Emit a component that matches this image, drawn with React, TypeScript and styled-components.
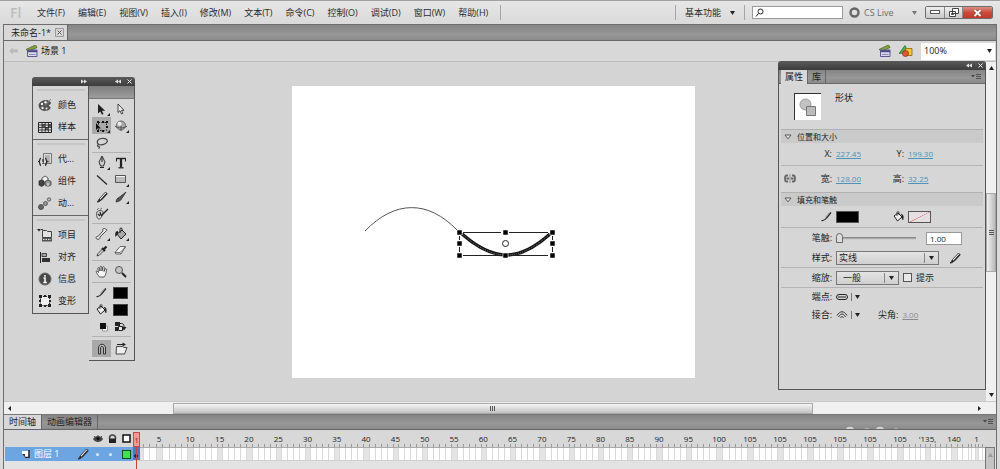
import React from 'react';
import styled, { createGlobalStyle } from 'styled-components';

const Global = createGlobalStyle`
  * { box-sizing: border-box; }
  body {
    margin: 0;
    background: #dadada;
    color: #222;
    font: 9px/12px "Open Sans", "Noto Sans CJK SC", sans-serif;
  }
  button, input, select {
    font: inherit;
    color: inherit;
    margin: 0;
    padding: 0;
    border: 0;
    border-radius: 0;
    background: none;
    appearance: none;
    outline: none;
  }
  button { white-space: nowrap; }
  svg { display: block; flex: none; }
  h2, p { margin: 0; font: inherit; }
`;

const bar = 'linear-gradient(#858585, #979797 60%, #8b8b8b)';
const dark = 'linear-gradient(#5a5a5a, #3c3c3c)';

const Page = styled.div`
  min-height: 100vh;
  display: flex;
  flex-direction: column;
  border-top: 1px solid #a29f9f;
`;

/* Menu bar */
const MenuBar = styled.header`
  display: flex;
  align-items: center;
  height: 23px;
  padding: 0 7px 0 10px;
  background: linear-gradient(#e6e6e6, #dadada);
`;
const Logo = styled.span`
  width: 27px;
  font: 600 14px/18px "Open Sans", sans-serif;
  color: #bdbdbd;
`;
const Menus = styled.nav`
  display: flex;
  gap: 13px;
  margin-right: 12px;
`;
const Divider = styled.span<{ $short?: boolean }>`
  width: 1px;
  height: ${(p) => (p.$short ? 8 : 15)}px;
  background: ${(p) => (p.$short ? '#777' : '#a5a5a5')};
`;
const Spacer = styled.span`
  flex: 1;
`;
const MenuButton = styled.button<{ $muted?: boolean }>`
  display: flex;
  align-items: center;
  gap: 9px;
  color: ${(p) => (p.$muted ? '#6c6c6c' : '#2a2a2a')};
`;
const Workspace = styled.div`
  display: flex;
  align-items: center;
  gap: 9px;
  margin-right: 7px;
`;
const SearchBox = styled.label`
  display: flex;
  align-items: center;
  width: 91px;
  height: 13px;
  margin-right: 6px;
  padding-left: 2px;
  background: #fff;
  border: 1px solid #9a9a9a;
  input { width: 70px; height: 10px; }
`;
const LiveButton = styled(MenuButton)`
  width: 68px;
  margin-right: 8px;
  gap: 4px;
  svg:last-child { margin-left: auto; }
`;
const WindowButtons = styled.div`
  display: flex;
  height: 13px;
  border: 1px solid #6d6d6d;
  border-radius: 2px;
  overflow: hidden;
`;
const WindowButton = styled.button<{ $close?: boolean }>`
  display: grid;
  place-items: center;
  width: ${(p) => (p.$close ? 30 : 18)}px;
  background: ${(p) => (p.$close ? 'linear-gradient(#dd8f84, #c94b3c 50%, #c2392a)' : 'linear-gradient(#eee, #c9c9c9)')};
  & + & { border-left: 1px solid #888; }
`;

/* Document window */
const DocWindow = styled.main`
  flex: 1;
  display: flex;
  flex-direction: column;
  margin: 0 3px;
  border: solid #6e6e6e;
  border-width: 1px 1px 0;
`;
const TabBar = styled.div`
  display: flex;
  height: 16px;
  background: ${bar};
  border-bottom: 1px solid #6a6a6a;
`;
const DocTab = styled.button`
  display: flex;
  align-items: center;
  gap: 4px;
  padding: 0 3px 0 7px;
  background: #d9d9d9;
  border-right: 1px solid #666;
`;
const SceneBar = styled.div`
  display: flex;
  align-items: center;
  height: 21px;
  padding: 0 1px 0 5px;
  gap: 8px;
  background: #d8d8d8;
  border-bottom: 1px solid #bdbdbd;
`;
const SceneName = styled.button`
  display: flex;
  align-items: center;
  gap: 3px;
  color: #111;
`;
const ZoomField = styled.label`
  display: flex;
  align-items: center;
  width: 74px;
  height: 17px;
  padding: 0 3px;
  background: #fff;
  select { flex: 1; height: 15px; }
`;
const StageRow = styled.div`
  position: relative;
  flex: 1;
  display: flex;
  min-height: 338px;
`;
const Stage = styled.section`
  flex: 1;
  display: flex;
  justify-content: center;
  align-items: flex-start;
  padding: 24px 4px 20px 0;
  background: #d4d4d4;
`;
const VScroll = styled.div`
  width: 10px;
  display: flex;
  flex-direction: column;
  align-items: center;
  padding: 4px 0;
  background: #f0f0f0;
`;
const VThumb = styled.span`
  width: 10px;
  height: 79px;
  margin: 123px 0 auto;
  display: grid;
  place-items: center;
  border: 1px solid #a9a9a9;
  background: linear-gradient(90deg, #eee, #bbb);
`;
const HScroll = styled.div`
  display: flex;
  align-items: center;
  height: 13px;
  padding: 0 15px 0 4px;
  background: #f0f0f0;
  border-top: 1px solid #c9c9c9;
`;
const HTrack = styled.div`
  flex: 1;
  display: grid;
  grid-template-columns: 161fr 642fr 164fr;
  height: 11px;
`;
const HThumb = styled.span`
  grid-column: 2;
  display: grid;
  place-items: center;
  border: 1px solid #a9a9a9;
  background: linear-gradient(#f6f6f6, #c2c2c2);
`;

/* Floating panels */
const Floating = styled.div<{ $left?: number; $right?: number }>`
  position: absolute;
  top: ${(p) => (p.$left === undefined ? -1 : 15)}px;
  ${(p) => (p.$left === undefined ? `right: ${p.$right}px;` : `left: ${p.$left}px;`)}
`;
const PanelHead = styled.div`
  display: flex;
  align-items: center;
  justify-content: flex-end;
  gap: 6px;
  height: 9px;
  padding-right: 3px;
  background: ${dark};
  border-radius: 3px 3px 0 0;
`;
const DockHead = styled(PanelHead)`
  justify-content: space-between;
  padding-left: 49px;
`;
const HeadButtons = styled.span`
  display: flex;
  gap: 6px;
`;
const Docks = styled.div`
  display: flex;
  align-items: flex-start;
`;
const Dock = styled.div`
  width: 57px;
  background: #d6d6d6;
  border: 1px solid #555;
  border-top: 0;
`;
const DockGroup = styled.div`
  padding: 8px 3px 1px;
  background: linear-gradient(#c6c6c6, #c6c6c6) 4px 3px / 48px 2px no-repeat;
  & + & { border-top: 1px solid #666; }
`;
const DockItem = styled.button`
  display: grid;
  grid-template-columns: 18px 1fr;
  gap: 4px;
  align-items: center;
  justify-items: center;
  height: 22px;
  span { justify-self: start; }
`;
const ToolPanel = styled.div`
  width: 46px;
  background: #d6d6d6;
  border: 1px solid #555;
  border-width: 0 1px 1px 0;
`;
const ToolBand = styled.div`
  height: 13px;
  background: linear-gradient(#7e7e7e, #9c9c9c);
  border-bottom: 1px solid #777;
`;
const ToolGroup = styled.div<{ $pad: number }>`
  display: grid;
  grid-template-columns: 19px 19px;
  grid-auto-rows: 17px;
  margin: 0 3px;
  padding: ${(p) => p.$pad}px 0;
  & + & { border-top: 1px solid #b2b2b2; }
`;
const Tool = styled.button<{ $on?: boolean }>`
  position: relative;
  display: grid;
  place-items: center;
  background: ${(p) => (p.$on ? '#a9a9a9' : 'none')};
`;
const Corner = styled.i`
  position: absolute;
  right: 1px;
  bottom: 1px;
  border: solid transparent;
  border-width: 3px 0 0 3px;
  border-bottom: 3px solid #222;
  height: 0;
`;
const Swatch = styled.span`
  width: 15px;
  height: 12px;
  background: #000;
  border: 1px solid #444;
`;

/* Properties panel */
const Props = styled.section`
  width: 208px;
  height: 320px;
  background: #d6d6d6;
  border: 1px solid #555;
  border-top: 0;
`;
const PropTabs = styled.div`
  display: flex;
  align-items: center;
  height: 14px;
  padding: 0 3px 0 2px;
  background: ${bar};
  border-bottom: 1px solid #6a6a6a;
`;
const PropTab = styled.button<{ $on?: boolean }>`
  height: 14px;
  padding: 0 4px;
  background: ${(p) => (p.$on ? '#d8d8d8' : 'none')};
  border-right: 1px solid #666;
`;
const Identity = styled.div`
  display: flex;
  gap: 14px;
  height: 45px;
  padding: 9px 15px;
  p { margin-top: -1px; }
`;
const Thumb = styled.div`
  display: grid;
  place-items: center;
  width: 27px;
  height: 27px;
  background: #fff;
  border: solid #333;
  border-width: 1px 0 0 1px;
`;
const SectionHead = styled.button`
  display: flex;
  align-items: center;
  gap: 5px;
  width: calc(100% - 4px);
  height: 14px;
  margin-left: 2px;
  padding-left: 3px;
  font-size: 8px;
  background: #cacaca;
  border-top: 1px solid #b2b2b2;
`;
const Row = styled.div<{ $h: number; $line?: boolean }>`
  display: flex;
  align-items: center;
  gap: 4px;
  height: ${(p) => p.$h}px;
  margin: 0 2px;
  border-bottom: 1px solid ${(p) => (p.$line ? '#b4b4b4' : 'transparent')};
`;
const PairRow = styled(Row)`
  display: grid;
  grid-template-columns: 51px 42px 22px 1fr;
`;
const Label = styled.label`
  display: flex;
  align-items: center;
  justify-content: flex-end;
  min-width: 51px;
`;
const SideLabel = styled(Label)`
  min-width: 0;
`;
const LinkIcon = styled.span`
  margin-right: auto;
  padding-left: 3px;
`;
const HotText = styled.input<{ $muted?: boolean }>`
  width: ${(p) => (p.$muted ? 18 : 26)}px;
  height: 12px;
  font-size: 8px;
  color: ${(p) => (p.$muted ? '#8a8a8a' : '#4a93bd')};
  text-decoration: underline;
`;
const ColorWell = styled.button<{ $none?: boolean }>`
  width: 23px;
  height: 12px;
  border: 1px solid #555;
  background: ${(p) =>
    p.$none ? 'linear-gradient(153deg, #e6dfe1 48%, #dd8c92 49%, #dd8c92 52%, #e6dfe1 53%)' : '#000'};
`;
const Slider = styled.input`
  width: 80px;
  height: 12px;
  margin-right: 6px;
  background: linear-gradient(#777, #ddd) 0 5px / 100% 3px no-repeat;
  &::-webkit-slider-thumb {
    appearance: none;
    width: 7px;
    height: 10px;
    background: #ddd;
    border: 1px solid #666;
    border-radius: 4px 4px 0 0;
  }
`;
const NumberBox = styled.input`
  width: 36px;
  height: 13px;
  padding-left: 3px;
  font-size: 8px;
  background: #fff;
  border: 1px solid #999;
`;
const SelectBox = styled.span<{ $w: number; $indent?: boolean }>`
  display: flex;
  align-items: center;
  gap: 4px;
  width: ${(p) => p.$w}px;
  height: 14px;
  padding: 0 4px 0 ${(p) => (p.$indent ? 6 : 2)}px;
  border: 1px solid #777;
  background: linear-gradient(#e4e4e4, #cfcfcf);
  select { flex: 1; height: 10px; line-height: 10px; min-width: 0; border-right: 1px solid #888; }
`;
const EditButton = styled.button`
  margin-left: 6px;
`;
const Check = styled.input`
  width: 9px;
  height: 9px;
  background: #e8e8e8;
  border: 1px solid #555;
`;
const DropButton = styled.button`
  display: flex;
  align-items: center;
  gap: 3px;
  width: 38px;
  height: 12px;
`;

/* Timeline */
const TimeTabs = styled.div`
  display: flex;
  align-items: center;
  height: 16px;
  padding-right: 2px;
  background: ${bar};
  border-top: 1px solid #777;
  border-bottom: 1px solid #666;
`;
const TimeTab = styled(PropTab)`
  padding: 0 5px;
`;
const Glints = styled.span`
  align-self: flex-end;
  margin-right: 84px;
`;
const Timeline = styled.section`
  display: grid;
  grid-template-columns: 129px 1fr 11px;
  min-height: 39px;
  background: #e3e3e3;
`;
const LayerHead = styled.div`
  display: flex;
  align-items: center;
  justify-content: flex-end;
  gap: 5px;
  height: 17px;
  padding-right: 2px;
  background: #d8d8d8;
`;
const Layer = styled.div`
  display: flex;
  align-items: center;
  height: 14px;
  margin-left: 1px;
  padding: 0 2px 0 16px;
  gap: 4px;
  color: #fff;
  background: #6ca5e2;
`;
const Marks = styled.span`
  display: flex;
  align-items: center;
  gap: 10px;
  margin-left: 3px;
`;
const Dot = styled.i`
  width: 3px;
  height: 3px;
  border-radius: 2px;
  background: #d8ecff;
`;
const LayerColor = styled.button`
  width: 9px;
  height: 9px;
  background: #3fe34f;
  border: 1px solid #134d1a;
`;
const FrameArea = styled.div`
  position: relative;
  display: flex;
  flex-direction: column;
  min-width: 0;
`;
const Ruler = styled.div`
  display: flex;
  height: 17px;
  padding-left: 10px;
  font-size: 8px;
  background: #d8d8d8;
  overflow: hidden;
`;
const RulerMark = styled.span<{ $w: number }>`
  flex: ${(p) => p.$w} 1 0;
  min-width: 0;
  display: flex;
  justify-content: center;
  padding-top: 3px;
  background: repeating-linear-gradient(90deg, #999 0 1px, transparent 1px 20%) 0 100% / 100% 3px no-repeat;
`;
const Frames = styled.div`
  display: flex;
  height: 14px;
  padding-left: 10px;
  border-top: 1px solid #aaa;
  border-bottom: 1px solid #cfcfcf;
`;
const FrameBlock = styled.span<{ $w: number }>`
  flex: ${(p) => p.$w} 1 0;
  min-width: 0;
  background:
    repeating-linear-gradient(90deg, #d9d9d9 0 1px, transparent 1px 20%),
    linear-gradient(90deg, #fff 40%, #e4e4e4 40%, #e4e4e4 60%, #fff 60%);
`;
const FrameScroll = styled.div`
  padding-top: 17px;
  background: linear-gradient(#d8d8d8, #d8d8d8) 0 0 / 100% 17px no-repeat;
  button {
    display: flex;
    justify-content: center;
    width: 10px;
    height: 100%;
    padding-top: 5px;
    background: #c4c4c4;
    border: 1px solid #777;
    border-bottom: 0;
  }
`;
const Playhead = styled.span`
  position: absolute;
  top: 2px;
  bottom: 0;
  left: 0;
  width: 7px;
  text-align: center;
  background: linear-gradient(#c8403c, #c8403c) 3px 0 / 1px 100% no-repeat;
  b {
    display: block;
    height: 15px;
    font: 8px/13px "Open Sans", sans-serif;
    color: #8d1f1f;
    background: #f09a9a;
    border: 1px solid #c84a48;
  }
`;
const KeyFrame = styled.span`
  position: absolute;
  top: 17px;
  left: 0;
  width: 7px;
  height: 13px;
  background: radial-gradient(circle at 3px 9px, #1c2c66 2px, #4f78c0 2px);
`;

type P = { children: React.ReactNode; w?: number; h?: number };
const Ico = ({ children, w = 16, h = 16 }: P) => (
  <svg width={w} height={h} viewBox={`0 0 ${w} ${h}`} fill="none" stroke="#222" strokeWidth="1" aria-hidden="true">
    {children}
  </svg>
);
const Down = ({ c = '#222' }: { c?: string }) => (
  <Ico w={5} h={4}><path d="M0 0h5L2.500 4z" fill={c} stroke="none" /></Ico>
);
const Tri = () => (
  <Ico w={8} h={6}><path d="M1 1h6L4 4.800z" stroke="#555" fill="#eee" /></Ico>
);
const MenuGlyph = () => (
  <Ico w={11} h={8}><path d="M0 2h4L2 4.500z" fill="#444" stroke="none" /><path d="M5 1.500h5M5 3.500h5M5 5.500h5" stroke="#505050" /></Ico>
);
const Collapse = ({ flip }: { flip?: boolean }) => (
  <Ico w={6} h={5}>
    <path d={flip ? 'M0 .5l3 2-3 2zM3 .5l3 2-3 2z' : 'M3 .5l-3 2 3 2zM6 .5l-3 2 3 2z'} fill="#e4e4e4" stroke="none" />
  </Ico>
);
const Cross = () => <Ico w={5} h={5}><path d="M.5.5l4 4M4.500.5l-4 4" stroke="#eee" /></Ico>;
const Clapper = () => (
  <Ico w={12} h={12}>
    <path d="M0 4.500L9.500 0l1.500 2.500L3 6z" fill="#86a83a" stroke="#41551f" strokeWidth=".7" />
    <path d="M1.500 5h9.500v6.500H1.500z" fill="#d9d8ee" stroke="#5b5793" />
    <path d="M2 6.200h9" stroke="#4b4682" strokeWidth="2" /><path d="M3 9.500h6.500" stroke="#8f8bbd" />
  </Ico>
);
const ShapesIcon = () => (
  <Ico w={14} h={12}>
    <path d="M0 8.500l6-8 3.500 7z" fill="#46b04a" stroke="#28662a" strokeWidth=".7" />
    <path d="M6.500 3.500h6.500v7H6.500z" fill="#f2c730" stroke="#8a6a10" strokeWidth=".8" />
    <circle cx="6.500" cy="8.500" r="3" fill="#e2583a" stroke="#8b2513" strokeWidth=".7" />
  </Ico>
);
const Pencil = () => (
  <Ico w={12} h={12}>
    <path d="M1 11c2 0 3-.5 4-2l6-6.500L9.500 1 3.500 7.500C3 9 2 10 1 11z" fill="#eee" strokeWidth=".8" />
    <path d="M11 2.500L5 9" strokeWidth="1.400" />
    <path d="M1 11c1.500 0 3-.5 4-2L3.500 7.500C3 9 2 10 1 11z" fill="#222" stroke="none" />
  </Ico>
);
const Stroke = () => (
  <Ico w={11} h={11}>
    <path d="M.5 9.500c2.500.3 4-1 5-2.500L10 1.500" strokeWidth="1.200" />
    <path d="M4.500 6.500L8.500 1.500" stroke="#888" strokeWidth=".8" />
  </Ico>
);
const Bucket = () => (
  <Ico w={11} h={11}>
    <path d="M1 5l4-3 4 4-4.500 4z" fill="#eee" />
    <path d="M4 5V1.500C4 .3 6 .3 6 1.500V4" strokeWidth=".8" />
    <path d="M8 3c2.500.5 2.800 3 2 6-.8-1-1.500-2.500-1-4z" fill="#222" strokeWidth=".4" />
  </Ico>
);

const dockIcons: Record<string, React.ReactNode> = {
  颜色: (
    <Ico w={14} h={14}>
      <path d="M1 7.500c0-3 3-4.500 6-5 3-.5 6 1 5.500 3-.4 1.200-2 .8-2 2s2 1 1.700 2.500c-.4 1.700-3 2.500-5.500 2.500-3.200 0-5.700-2-5.700-5z" fill="#555" stroke="#333" strokeWidth=".6" />
      <g fill="#eee" stroke="none"><circle cx="4" cy="6" r="1.200" /><circle cx="7.500" cy="4.300" r="1.200" /><circle cx="4.500" cy="10" r="1.200" /><circle cx="8.500" cy="10.500" r="1" /></g>
      <path d="M7 7.500L13 1" stroke="#888" />
    </Ico>
  ),
  样本: (
    <Ico w={14} h={11}>
      <path d="M.5.5h13v10H.5z" fill="#ddd" /><path d="M4 2h3v3H4zM7 5h3v3H7zM10 2h3v3h-3z" fill="#666" stroke="none" />
      <path d="M4 .5v10M7.200.5v10M10.400.5v10M.5 3h13M.5 5.500h13M.5 8h13" stroke="#222" strokeWidth=".8" />
    </Ico>
  ),
  '代...': (
    <Ico w={15} h={13}>
      <path d="M5.500.5h8v10h-8z" fill="#ddd" stroke="#777" /><path d="M7 3h5M7 5h5M8 7h4M9 9h3" stroke="#888" />
      <path d="M3 5C1 5.500 2.500 8 .8 8.500 2.500 9 1 12 3 12.500M7 5c2 .5.500 3 2.200 3.500C7.500 9 9 12 7 12.500M5 6v3M5 10v1" strokeWidth="1.200" />
    </Ico>
  ),
  组件: (
    <Ico w={14} h={12}>
      <path d="M4 3l3-2 3 2v4L7 8 4 7z" fill="#eee" strokeWidth=".7" />
      <path d="M1 6l2.500-1L6 6v4l-2.500 1.500L1 10z" fill="#444" strokeWidth=".7" />
      <path d="M7 6.500L10 5l3 1.500V10l-3 1.500L7 10z" fill="#999" strokeWidth=".7" /><path d="M10 8v3.500" stroke="#eee" />
    </Ico>
  ),
  '动...': (
    <Ico w={14} h={13}>
      <g stroke="#333" strokeWidth=".7"><circle cx="3" cy="10" r="2.500" fill="#666" /><circle cx="7.500" cy="6.500" r="2" fill="#999" /><circle cx="11" cy="2.500" r="1.700" fill="#bbb" /></g>
    </Ico>
  ),
  项目: (
    <Ico w={16} h={14}>
      <path d="M0 1h4L2 3.500z" fill="#222" stroke="none" /><path d="M4 1.500h2M5.500 2.500h4l1 1h4v6h-9z" fill="#e2e2e2" stroke="#444" />
      <path d="M5 10h10v3.500H5z" fill="#555" stroke="none" /><path d="M6 11.500h8" stroke="#ddd" strokeDasharray="1.500 1" />
    </Ico>
  ),
  对齐: (
    <Ico w={12} h={11}><path d="M1.500 0v11" /><path d="M3 1.500h4.500v3H3z" fill="#aaa" strokeWidth=".8" /><path d="M3 6h8v4H3z" fill="#333" stroke="none" /></Ico>
  ),
  信息: (
    <Ico w={14} h={14}><circle cx="7" cy="7" r="6" fill="#484848" stroke="#666" /><path d="M7 3v1.800M5.500 6H7v4.500M5.300 10.500h3.500" stroke="#fff" strokeWidth="1.500" /></Ico>
  ),
  变形: (
    <Ico w={12} h={12}>
      <path d="M1.500 1.500h9v9h-9z" fill="#eee" strokeDasharray="1.500 1" />
      <path d="M0 0h3v3H0zM9 0h3v3H9zM0 9h3v3H0zM9 9h3v3H9zM5 0h2v2H5zM5 10h2v2H5zM0 5h2v2H0zM10 5h2v2h-2z" fill="#222" stroke="none" />
    </Ico>
  ),
};
const docks = [['颜色', '样本'], ['代...', '组件', '动...'], ['项目', '对齐', '信息', '变形']];

type ToolDef = { name: string; icon: React.ReactNode; on?: boolean; more?: boolean } | null;
const toolGroups: { pad: number; tools: ToolDef[] }[] = [
  { pad: 1, tools: [
    { name: '选择', more: true, icon: <Ico w={12} h={12}><path d="M2 1v9.500l2.300-2 1.700 3.200 1.500-.8L6 7.700h3.200z" fill="#222" stroke="none" /></Ico> },
    { name: '部分选取', icon: <Ico w={12} h={12}><path d="M3 1v8.500l2-1.800L6.500 11l1.300-.6L6.500 7.300H9z" fill="#eee" strokeWidth=".8" /></Ico> },
    { name: '任意变形', on: true, more: true, icon: <Ico w={13} h={12}><path d="M3.500 2.500h8v8h-8z" strokeDasharray="1.500 1.500" /><path d="M2 1h2v2H2zM7 1h2v2H7zM11 1h2v2h-2zM11 6h2v2h-2zM2 10h2v2H2zM7 10h2v2H7z" fill="#111" stroke="none" /><path d="M1 3v7l1.700-1.500H6z" fill="#111" stroke="none" /></Ico> },
    { name: '3D 旋转', more: true, icon: <Ico w={14} h={14}><circle cx="7" cy="6.500" r="4.500" fill="#aaa" stroke="#666" /><circle cx="5.500" cy="4.800" r="2" fill="#eee" stroke="none" /><path d="M1 7c2 2.500 10 2.500 12 0M7 7v5" stroke="#555" /></Ico> },
    { name: '套索', icon: <Ico w={14} h={12}><path d="M4 7.500C1 6 2 2 6.500 1.500S13 3 12 5 7 8.500 4 7.500zM4 7.500c-2 0-2 2-.5 2s1 1.500 0 2" stroke="#444" strokeWidth="1.200" /></Ico> },
    null,
  ] },
  { pad: 1, tools: [
    { name: '钢笔', more: true, icon: <Ico w={12} h={13}><path d="M6 0L3 6l1.500 4h3L9 6z" fill="#ccc" strokeWidth=".9" /><path d="M6 1v5M4 11.500h4" /></Ico> },
    { name: '文本', icon: <Ico w={12} h={12}><path d="M1.500 4.500V1.500h9v3" strokeWidth="1" /><path d="M1 1.500h10" strokeWidth="1.400" /><path d="M6 1.500v9" strokeWidth="2.200" /><path d="M3.500 10.800h5" strokeWidth="1.200" /></Ico> },
    { name: '线条', icon: <Ico w={12} h={12}><path d="M1 1.500l10 9" strokeWidth="1.200" /></Ico> },
    { name: '矩形', more: true, icon: <Ico w={13} h={11}><path d="M1.500 1.500h10v7h-10z" fill="#bbb" stroke="#555" /><path d="M2 2.500h9" stroke="#f4f4f4" /></Ico> },
    { name: '铅笔', icon: <Pencil /> },
    { name: '刷子', more: true, icon: <Ico w={12} h={12}><path d="M1 11c.5-3 1.500-4 3-4.500L11 1 6.500 8C5.500 10 3.500 10.500 1 11z" fill="#555" strokeWidth=".7" /></Ico> },
    { name: 'Deco', icon: <Ico w={14} h={13}><path d="M2 5c1-2 7-2 6 1s-2 6-4 6-3-4-2-7z" fill="#ddd" strokeWidth=".8" /><path d="M3 7l2 2M5 5l1 3M6 9l7-7" strokeWidth="1.300" /><path d="M2 3l2-2M5 2.500L7 1" stroke="#777" /></Ico> },
    null,
  ] },
  { pad: 1, tools: [
    { name: '骨骼', more: true, icon: <Ico w={13} h={13}><path d="M2 12c-2-1-.5-3 1-2.500L8 4c-1-2 1-3.500 2-2 2-.5 2.500 2 .5 2.500L5 10c.5 2-2 3-3 2z" fill="#eee" strokeWidth=".8" /></Ico> },
    { name: '颜料桶', more: true, icon: <Ico w={13} h={13}><path d="M3 7l5-4 4 4-5 5z" fill="#aaa" /><path d="M6 6V2c0-1.500 2-1.500 2 0v2" /><path d="M4 4C1 4 1 7 1.500 10 3 9 3 7 4 6z" fill="#222" stroke="none" /></Ico> },
    { name: '滴管', icon: <Ico w={12} h={12}><path d="M1 11l1-2.500 5-5L8.500 5l-5 5z" fill="#ddd" strokeWidth=".8" /><path d="M6 3l3 3M7.500 4.500l3-3" strokeWidth="2.200" /></Ico> },
    { name: '橡皮擦', icon: <Ico w={13} h={11}><path d="M1 7.500L6 1.500h5.500L7 9H2z" fill="#f2f2f2" stroke="#444" strokeWidth=".8" /><path d="M1 7.500h5L11.500 2M6 7.500L7 9" stroke="#555" strokeWidth=".8" /></Ico> },
  ] },
  { pad: 2, tools: [
    { name: '手形', icon: <Ico w={13} h={13}><path d="M4.500 12C3 10 1.500 8 1 6.500c.8-.8 1.800 0 2.500 1L2.800 3c.8-.8 1.600-.2 1.800.6L5 6V1.800c.6-1 1.700-.6 1.700.3L7 6l.8-4c.8-.8 1.600 0 1.500.8L9 6.500l1.200-2.700c1-.4 1.500.3 1.300 1C11 8 11 10 9 12z" fill="#f5f5f5" strokeWidth=".7" /></Ico> },
    { name: '缩放', icon: <Ico w={13} h={13}><circle cx="5" cy="5" r="3.500" fill="#c4c4c4" stroke="#555" /><path d="M8 8l4 4" strokeWidth="2" /></Ico> },
  ] },
  { pad: 1, tools: [
    { name: '笔触颜色', icon: <Stroke /> },
    { name: '笔触色板', icon: <Swatch /> },
    { name: '填充颜色', icon: <Bucket /> },
    { name: '填充色板', icon: <Swatch /> },
    { name: '黑白', icon: <Ico w={13} h={10}><path d="M7.500 4v5h5V4z" fill="#fff" stroke="#999" /><path d="M5 1h6v6H5z" fill="#111" stroke="none" /></Ico> },
    { name: '交换颜色', icon: <Ico w={14} h={11}><path d="M1 1h5v4H1zM1 6h3v4H1z" fill="#222" stroke="none" /><path d="M4.500 5.500h4v4h-4z" fill="#eee" /><path d="M6 2.500h1.500c2 0 2.500 1 2.500 4" /><path d="M7.500 6h5L10 9.500z" fill="#222" stroke="none" /></Ico> },
  ] },
  { pad: 3, tools: [
    { name: '贴紧至对象', on: true, icon: <Ico w={12} h={12}><path d="M2.500 11V5c0-5 7-5 7 0v6h-2V5c0-2-3-2-3 0v6z" fill="#bbb" stroke="#333" /></Ico> },
    { name: '选项', icon: <Ico w={14} h={13}><path d="M2.500 4.500h6l1.500 1h3l-2.500 6.500H2z" fill="#eee" stroke="#444" /><path d="M3 2.500h7" /><path d="M8.500.5l3.500 2-3.500 2z" fill="#222" stroke="none" /></Ico> },
  ] },
];

const menus = ['文件(F)', '编辑(E)', '视图(V)', '插入(I)', '修改(M)', '文本(T)', '命令(C)', '控制(O)', '调试(D)', '窗口(W)', '帮助(H)'];

/* Ruler label and relative width of each five-frame block */
const blocks: [string, number][] = [
  ['5', 320], ['10', 300],
  ...Array.from({ length: 17 }, (_, i): [string, number] => [String(15 + i * 5), 293]),
  ['100', 320],
  ...Array.from({ length: 6 }, (): [string, number] => ['105', 300]),
  ["'135,", 250], ['140', 280], ['1', 170],
];

const Artwork = () => {
  const xs = [167, 213, 260];
  const ys = [146, 157, 169];
  return (
    <svg width="403" height="292" viewBox="0 0 403 292" role="img" aria-label="舞台">
      <rect width="403" height="292" fill="#fff" />
      <path d="M73 145C103 114 136 114 165 144" fill="none" stroke="#555" />
      <path d="M170 148C202 176 227 176 258 148" fill="none" stroke="#111" strokeWidth="3.400" />
      <path d="M170 148C202 176 227 176 258 148" fill="none" stroke="#777" strokeWidth="1" strokeDasharray="1 1" />
      <path d="M171 146.500h38M217 146.500h39M171 169.500h38M217 169.500h39M167.500 150v4M167.500 161v5M260.500 150v4M260.500 161v5" stroke="#222" />
      {xs.map((x) => ys.map((y) => (x === 213 && y === 157 ? null : (
        <rect key={`${x}-${y}`} x={x - 2} y={y - 2} width="5" height="5" fill="#000" stroke="#fff" strokeWidth=".5" />
      ))))}
      <circle cx="213.500" cy="157.500" r="3" fill="#fff" stroke="#222" />
    </svg>
  );
};

function Tools() {
  return (
    <Floating $left={28}>
      <DockHead>
        <Collapse flip />
        <HeadButtons><Collapse /><Cross /></HeadButtons>
      </DockHead>
      <Docks>
        <Dock>
          {docks.map((g) => (
            <DockGroup key={g[0]}>
              {g.map((n) => <DockItem key={n}>{dockIcons[n]}<span>{n}</span></DockItem>)}
            </DockGroup>
          ))}
        </Dock>
        <ToolPanel>
          <ToolBand />
          {toolGroups.map((g, i) => (
            <ToolGroup key={i} $pad={g.pad}>
              {g.tools.map((t, j) => t ? (
                <Tool key={t.name} $on={t.on} aria-label={t.name}>{t.icon}{t.more && <Corner />}</Tool>
              ) : <span key={j} />)}
            </ToolGroup>
          ))}
        </ToolPanel>
      </Docks>
    </Floating>
  );
}

function Properties() {
  return (
    <Floating $right={10}>
      <PanelHead><Collapse /><Cross /></PanelHead>
      <Props>
        <PropTabs>
          <PropTab $on>属性</PropTab>
          <PropTab>库</PropTab>
          <Spacer />
          <MenuGlyph />
        </PropTabs>
        <Identity>
          <Thumb>
            <Ico w={18} h={19}>
              <circle cx="6.500" cy="6.500" r="5.500" fill="#c2c2c2" stroke="#999" />
              <path d="M7.500 8.500h9v9h-9z" fill="#bbb" stroke="#777" />
            </Ico>
          </Thumb>
          <p>形状</p>
        </Identity>
        <SectionHead><Tri />位置和大小</SectionHead>
        <PairRow $h={23} $line>
          <Label htmlFor="x">X:</Label><HotText id="x" defaultValue="227.45" />
          <SideLabel htmlFor="y">Y:</SideLabel><HotText id="y" defaultValue="199.30" />
        </PairRow>
        <PairRow $h={26}>
          <Label htmlFor="w">
            <LinkIcon>
              <Ico w={12} h={9}><path d="M4 1.500H2.500c-2 0-2 6 0 6H4M8 1.500h1.500c2 0 2 6 0 6H8M2.500 4.500H5M7 4.500h2.500" stroke="#666" strokeWidth="1.800" /><path d="M6 0v9" stroke="#888" /></Ico>
            </LinkIcon>
            宽:
          </Label>
          <HotText id="w" defaultValue="128.00" />
          <SideLabel htmlFor="h">高:</SideLabel><HotText id="h" defaultValue="32.25" />
        </PairRow>
        <SectionHead><Tri />填充和笔触</SectionHead>
        <PairRow $h={22} $line>
          <Label as="span"><Stroke /></Label><ColorWell aria-label="笔触颜色" />
          <SideLabel as="span"><Bucket /></SideLabel><ColorWell $none aria-label="填充颜色" />
        </PairRow>
        <Row $h={21}>
          <Label htmlFor="size">笔触:</Label>
          <Slider id="size" type="range" min="0" max="200" defaultValue="1" />
          <NumberBox aria-label="笔触大小" defaultValue="1.00" />
        </Row>
        <Row $h={19} $line>
          <Label htmlFor="style">样式:</Label>
          <SelectBox $w={103}><select id="style"><option>实线</option></select><Down /></SelectBox>
          <EditButton aria-label="编辑笔触样式"><Pencil /></EditButton>
        </Row>
        <Row $h={20} $line>
          <Label htmlFor="scale">缩放:</Label>
          <SelectBox $w={63} $indent><select id="scale"><option>一般</option></select><Down /></SelectBox>
          <Check type="checkbox" id="hint" />
          <SideLabel htmlFor="hint">提示</SideLabel>
        </Row>
        <Row $h={18}>
          <Label htmlFor="cap">端点:</Label>
          <DropButton id="cap">
            <Ico w={12} h={6}><rect x=".5" y=".5" width="11" height="5" rx="2.500" /><path d="M2 3h8" /></Ico>
            <Divider $short /><Down />
          </DropButton>
        </Row>
        <Row $h={18}>
          <Label htmlFor="join">接合:</Label>
          <DropButton id="join">
            <Ico w={12} h={9}><path d="M1 5.500c3-5 7-5 10 0M2.500 7c2.500-4 4.500-4 7 0M4.500 8c1-2 2-2 3 0" stroke="#333" /></Ico>
            <Divider $short /><Down />
          </DropButton>
          <SideLabel htmlFor="miter">尖角:</SideLabel>
          <HotText id="miter" $muted defaultValue="3.00" />
        </Row>
      </Props>
    </Floating>
  );
}

export default function App() {
  return (
    <Page>
      <Global />
      <MenuBar>
        <Logo>Fl</Logo>
        <Menus>{menus.map((m) => <MenuButton key={m}>{m}</MenuButton>)}</Menus>
        <Divider />
        <Spacer />
        <Workspace>
          <Divider />
          <MenuButton>基本功能<Down /></MenuButton>
          <Divider />
        </Workspace>
        <SearchBox>
          <Ico w={9} h={9}><circle cx="5.500" cy="3.500" r="2.500" /><path d="M3.500 5.500L1 8.500" /></Ico>
          <input type="search" aria-label="搜索" />
        </SearchBox>
        <LiveButton $muted>
          <Ico w={11} h={11}><circle cx="5.500" cy="5.500" r="4" stroke="#666" strokeWidth="2.400" /></Ico>
          CS Live
          <Down c="#777" />
        </LiveButton>
        <WindowButtons>
          <WindowButton aria-label="最小化"><Ico w={10} h={5}><rect x=".5" y=".5" width="9" height="3" fill="#fff" stroke="#555" /></Ico></WindowButton>
          <WindowButton aria-label="还原"><Ico w={10} h={9}><path d="M3.500.5h6v5h-6zM.5 3.500h6v5h-6z" fill="#fff" stroke="#444" /><path d="M2.500 5.500h2v1h-2z" stroke="#444" /></Ico></WindowButton>
          <WindowButton $close aria-label="关闭"><Ico w={9} h={8}><path d="M1.500 1l6 6M7.500 1l-6 6" stroke="#7a2a22" strokeWidth="3" /><path d="M1.500 1l6 6M7.500 1l-6 6" stroke="#fff" strokeWidth="2" /></Ico></WindowButton>
        </WindowButtons>
      </MenuBar>

      <DocWindow>
        <TabBar>
          <DocTab>
            未命名-1*
            <Ico w={9} h={9}><path d="M.5.5h8v8h-8z" stroke="#999" /><path d="M2.500 2.500l4 4M6.500 2.500l-4 4" stroke="#555" /></Ico>
          </DocTab>
        </TabBar>
        <SceneBar>
          <Ico w={9} h={8}><path d="M0 4l4-3.500v2h5v3H4v2z" fill="#bbb" stroke="none" /></Ico>
          <SceneName><Clapper />场景 1</SceneName>
          <Spacer />
          <button aria-label="编辑场景"><Clapper /></button>
          <button aria-label="编辑元件"><ShapesIcon /></button>
          <ZoomField>
            <select aria-label="缩放比例"><option>100%</option></select>
            <Down />
          </ZoomField>
        </SceneBar>
        <StageRow>
          <Stage><Artwork /></Stage>
          <VScroll>
            <Ico w={5} h={4}><path d="M0 4h5L2.500 0z" fill="#222" stroke="none" /></Ico>
            <VThumb><Ico w={5} h={6}><path d="M0 .5h5M0 2.500h5M0 4.500h5" stroke="#555" /></Ico></VThumb>
            <Down />
          </VScroll>
          <Tools />
          <Properties />
        </StageRow>
        <HScroll>
          <Ico w={4} h={5}><path d="M3 0v5L0 2.500z" fill="#222" stroke="none" /></Ico>
          <HTrack><HThumb><Ico w={6} h={5}><path d="M.5 0v5M2.500 0v5M4.500 0v5" stroke="#555" /></Ico></HThumb></HTrack>
          <Ico w={4} h={5}><path d="M1 0v5l3-2.500z" fill="#222" stroke="none" /></Ico>
        </HScroll>
        <TimeTabs>
          <TimeTab $on>时间轴</TimeTab>
          <TimeTab>动画编辑器</TimeTab>
          <Spacer />
          <Glints>
            <Ico w={54} h={3}>
              <path d="M1 3c1-3 7-3 8 0zM31 3c1-3 7-3 8 0z" fill="#d6d6d6" stroke="none" />
              <path d="M19 3c1-1.500 5-1.500 6 0zM49 3c1-1.500 3-1.500 4 0z" fill="#b4b4b4" stroke="none" />
            </Ico>
          </Glints>
          <MenuGlyph />
        </TimeTabs>
        <Timeline>
          <div>
            <LayerHead>
              <Ico w={10} h={8}><path d="M0 4c2-4 8-4 10 0-2 4-8 4-10 0z" fill="#444" stroke="none" /><circle cx="5" cy="3.500" r="1.500" fill="#111" stroke="none" /><path d="M1 2l1-1M5 1V0M9 2L8 1" stroke="#555" /></Ico>
              <Ico w={9} h={10}><path d="M1.500 5V4c0-4 6-4 6 0v1" stroke="#444" strokeWidth="1.500" /><path d="M1 4.500h7V9H1z" fill="#222" stroke="none" /></Ico>
              <Ico w={9} h={9}><path d="M1 1h7v7H1z" fill="#fff" stroke="#111" strokeWidth="1.500" /></Ico>
            </LayerHead>
            <Layer>
              <Ico w={9} h={8}><path d="M1 1h7v6H5L1 4z" fill="#fff" stroke="none" /><path d="M8 0v7.500H4" strokeWidth="1.500" /><path d="M1 4l3 3V4z" fill="#333" stroke="none" /></Ico>
              图层 1
              <Spacer />
              <Pencil />
              <Marks><Dot /><Dot /><LayerColor aria-label="轮廓颜色" /></Marks>
            </Layer>
          </div>
          <FrameArea>
            <Ruler>{blocks.map(([t, w], i) => <RulerMark key={i} $w={w}>{t}</RulerMark>)}</Ruler>
            <Frames>{blocks.map(([, w], i) => <FrameBlock key={i} $w={w} />)}</Frames>
            <KeyFrame />
            <Playhead><b>1</b></Playhead>
          </FrameArea>
          <FrameScroll>
            <button aria-label="向上滚动"><Ico w={5} h={4}><path d="M0 4h5L2.500 0z" fill="#999" stroke="none" /></Ico></button>
          </FrameScroll>
        </Timeline>
      </DocWindow>
    </Page>
  );
}
